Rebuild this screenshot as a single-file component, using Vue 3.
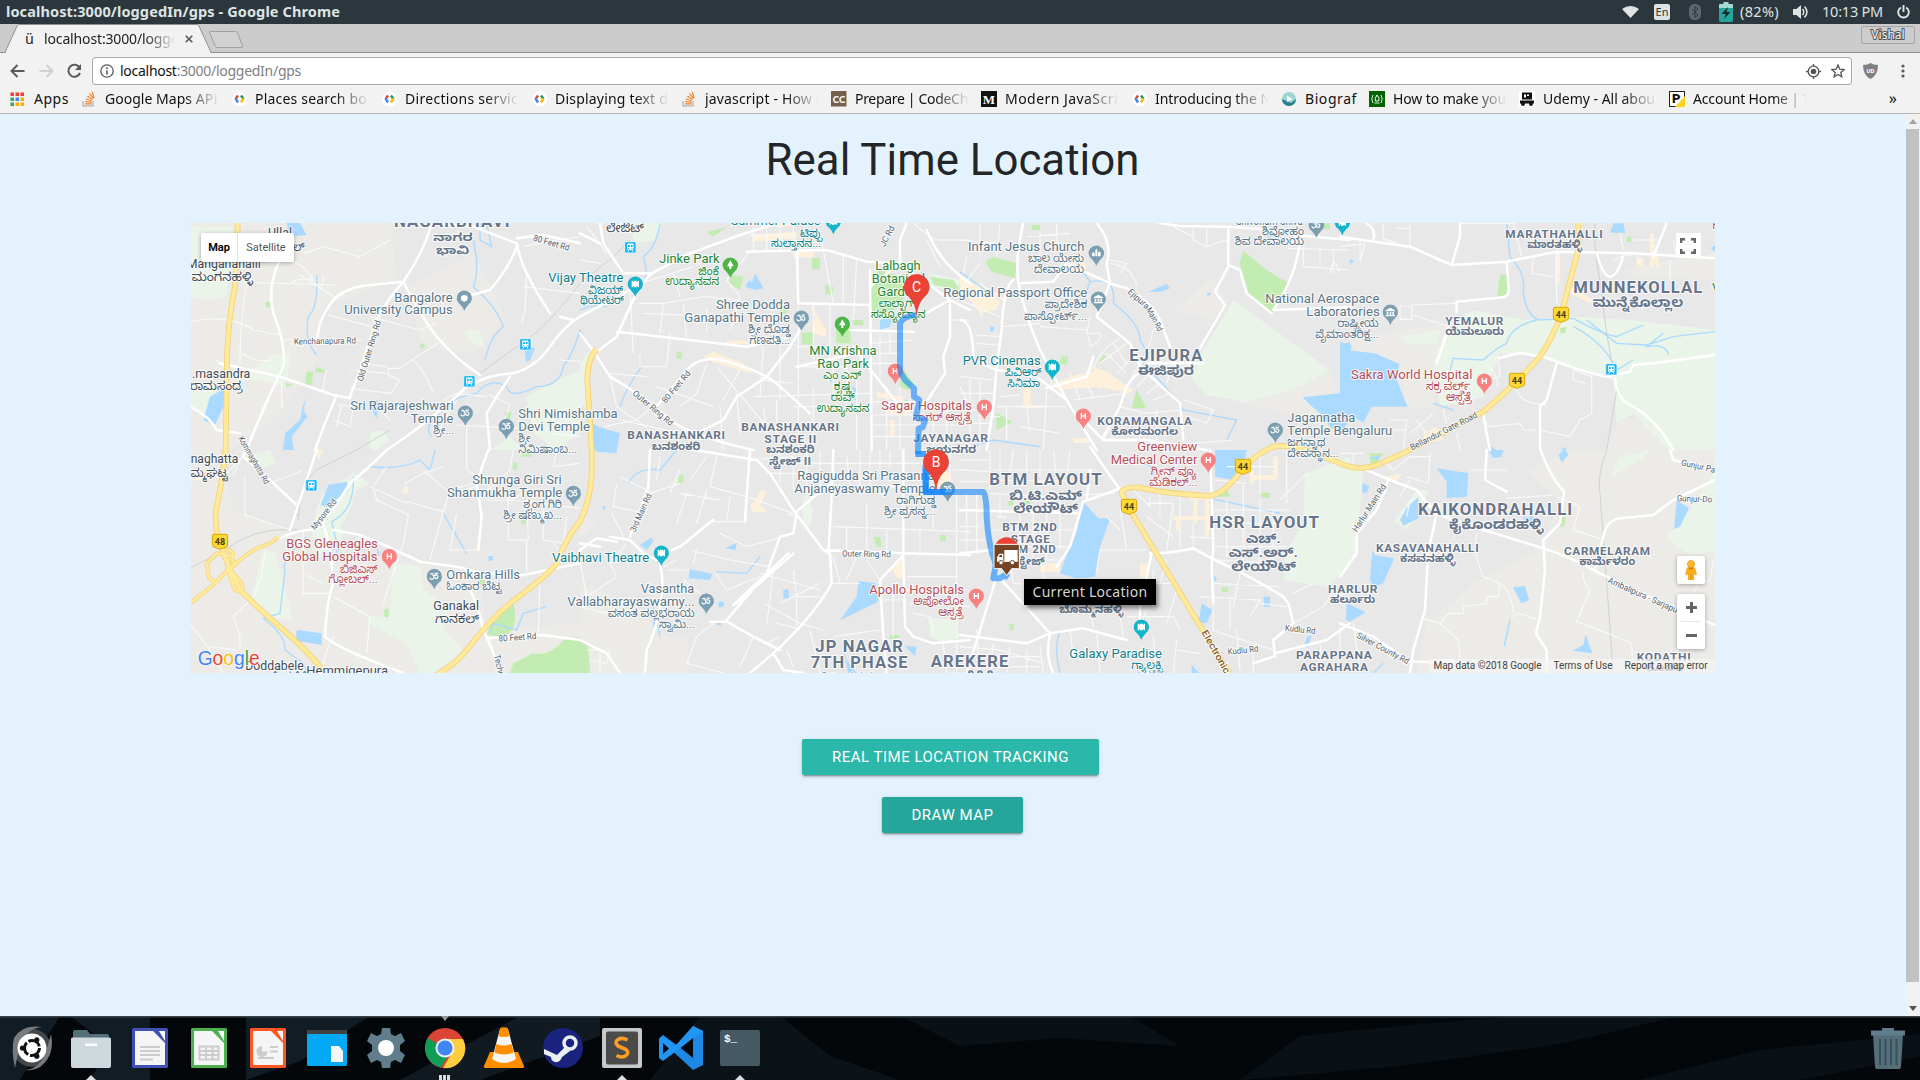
<script setup>
// Stretches or tightens a line of text to a given advance width.
const vFit = {
  mounted(el, { value }) {
    const n = [...el.textContent].length
    const w = el.getBoundingClientRect().width
    el.style.letterSpacing = (value - w) / n + 'px'
  },
}

const bookmarks = [
  { icon: 'stack', text: 'Google Maps API', w: 113 },
  { icon: 'dev', text: 'Places search bo', w: 112 },
  { icon: 'dev', text: 'Directions servic', w: 113 },
  { icon: 'dev', text: 'Displaying text d', w: 113 },
  { icon: 'stack', text: 'javascript - How t', w: 116 },
  { icon: 'cc', text: 'Prepare | CodeCh', w: 113 },
  { icon: 'medium', text: 'Modern JavaScri', w: 113 },
  { icon: 'dev', text: 'Introducing the N', w: 116 },
  { icon: 'bio', text: 'Biograf', w: 52, short: true },
  { icon: 'fcc', text: 'How to make you', w: 113 },
  { icon: 'udemy', text: 'Udemy - All abou', w: 112 },
  { icon: 'pa', text: 'Account Home | T', w: 117 },
]

const dock = ['ubuntu', 'files', 'writer', 'calc', 'impress', 'plank', 'settings', 'chrome', 'vlc', 'steam', 'sublime', 'code', 'terminal']
const running = ['files', 'sublime', 'terminal']

// Map sheets: origin of each sheet on the map canvas (three units per pixel).
const T = { A: [0, 0], B: [0, 690], C: [1170, 0], D: [1170, 690], E: [2310, 0], F: [2310, 690], G: [3450, 0], H: [3450, 690] }
const at = (t) => `translate(${T[t][0]} ${T[t][1]})`

const layers = [
  ['warm', {
    A: 'M0 0L600 0 620 180 400 260 380 420 250 600 120 690 0 690Z M650 200L850 100 950 300 850 400 700 380Z',
    B: 'M0 0L90 0 130 180 300 240 600 330 700 340 870 400 890 540 1170 520 1170 669 0 669Z',
    D: 'M0 400L200 480 230 560 320 560 330 669 0 669Z M0 180L50 220 0 260Z',
    E: 'M640 270L760 170 800 240 760 300Z M820 540L1000 490 1110 450 1170 600 1100 620 900 560Z',
    G: 'M180 330L330 310 280 440 280 560 200 560 180 430 0 370Z M830 610L920 580 990 690 800 690Z M850 150L1125 100 1125 180 880 170Z',
    H: 'M560 60L700 0 1125 0 1125 669 230 669 260 520 400 400 600 300 660 150Z',
  }],
  ['light', {
    A: 'M0 20L130 20 110 230 50 240 0 230Z M130 480L260 400 300 400 290 500 200 480Z M1010 530L1060 500 1170 450 1170 640 1100 690 1030 640Z M820 335L870 330 885 385 850 370Z M0 500L90 500 60 600 0 560Z M900 690L960 650 1000 690Z M540 640L580 630 600 660 560 690H540Z',
    B: 'M490 70L540 100 500 120Q480 190 450 230 470 250 440 290L380 330 370 280Q360 200 400 130Z M220 295L255 310 275 380 310 510 225 500 185 440Z M610 340L690 350 700 420 780 470 760 540 820 600 730 669H690L650 580 530 520 540 500 600 500Z M160 20L240 0 260 40 200 60Z',
    C: 'M0 430L30 390 30 560 0 560Z M150 0L250 0 230 60 160 70Z M1050 160L1140 180 1130 210 1040 200Z',
    D: 'M680 130L700 180 690 230 670 220 665 160Z M1045 500L1120 510 1140 560 1100 580 1050 560Z',
    E: 'M820 240L1110 450Q1000 520 850 545L740 525 695 475 730 390Z',
    F: 'M1035 70L1170 20V350L1100 410 970 390 980 300 1030 220Z',
    G: 'M400 270L560 300 700 290 870 300 1125 330V690H990L880 580 830 610 820 480 700 450 600 410 480 400 430 530 300 560 280 430 330 310Z M180 350L300 330 290 370 200 375Z',
    H: 'M0 40L70 60 60 180 50 320 0 370Z M1125 60L1050 180 980 260 1050 320 1125 300Z M840 20L930 0 900 30 815 80Z M160 215L230 120 270 120 200 240Z',
  }],
  ['park', {
    A: 'M228 246h20v16h-20Z M350 455L370 455 365 495 345 495Z M378 440L405 450 400 460 375 455Z M688 378L697 368 706 378 697 388Z M945 575L965 575 960 600 945 595Z M283 488L312 494 290 502Z M215 120h18v8h-18z',
    B: 'M970 460Q990 540 940 560L890 555 910 500Z M1170 560L1120 570Q1080 620 1030 610L970 640 960 669H1170Z M582 480q8 -8 14 0v18q-6 10 -14 0Z M968 38h14v20h-14z M994 205h12v18h-12z M868 388h16v14h-16z M318 175L325 195 312 205Z M995 0h30v20h-30z',
    C: 'M455 165L490 170 480 210 445 190Z M695 113h25v35h-25z M735 195L760 200 757 225 737 222Z M768 320H812V370H768Z M665 340L700 335V375L665 372Z M290 395h15v22h-15z M895 150L970 170V250L910 290 870 300V220Z M1050 170L1120 180 1140 210 1060 195Z M380 35L430 25 460 5 400 50Z M960 540L985 540 975 570 950 580Z M965 440L1000 490 985 510 960 500Z M600 262h20v20h-20z M820 300h30v16h-30z',
    D: 'M0 570L25 590 30 669H0Z M295 75h15v25h-15z M880 260L900 262 905 290 890 290Z M1080 255h18v18h-18z M930 555H960L955 565 930 567Z',
    E: 'M850 92L920 150 985 190 935 285 870 230 838 130Z M100 110L170 130 165 175 95 155 75 125Z M305 408L325 410 320 435 298 430Z M530 508L560 565H515Z M108 578L158 605 110 630Z M430 405L438 408 425 428 418 425Z M215 15h25v15h-25z M1090 10h20v18h-20z',
    F: 'M905 128h25v15h-25z M770 140L800 115 810 140Z M785 412h20v14h-20z M190 150h20v15h-20z M145 152h15v15h-15z M148 522h14v18h-14z M195 578L240 560 245 565 200 580Z',
    G: 'M480 165L500 163 502 225 470 230Z M660 325L680 320 675 340 662 340Z M860 50h14v16h-14z',
    H: 'M658 205L678 200 672 230 656 228Z M90 10L130 10 110 40 90 40Z',
  }],
  ['cream', {
    B: 'M375 0H400L385 30Z M640 110h14v18h-14z',
    C: 'M520 45L650 35V55L520 65Z M550 10h80v10h-80z M640 92H700V112H640Z M370 410L400 395 490 430 520 460 480 450 400 425Z M690 250L740 330 735 350 700 340 705 290Z M440 362h80v10h-80z M890 515L970 530V545L890 530Z M920 570h70v14h-70z M930 600h14v50h-14z',
    D: 'M510 170L545 120 560 125 540 165 565 185 520 185Z M310 280L395 205 385 225 320 280Z M920 370L965 320 975 385 950 385 940 360Z M1060 90L1100 60 1120 100 1070 110Z',
    E: 'M0 165L120 245 110 270 60 280 0 200Z M50 190L120 220 60 290Z M280 490L350 465 430 450 520 510 510 520 420 500 290 510Z M190 500h22v60h-22z M400 440L450 460 420 510Z M340 655h50v14h-50z M180 555h70v10h-70z M320 130h60v18h-60z',
    F: 'M690 140h65v10h-65z M700 140h12v80h-12z M735 150h12v110h-12z M640 198h120v12h-120z M648 200h10v42h-10z M870 75h80v14h-80z M940 20h14v60h-14z M240 340h60v25h-60z M540 340L565 345 550 390 540 380Z M870 60h12v40h-12z',
    G: 'M645 100h16v90h-16z M930 40h12v100h-12z M890 115h20v25h-20z M945 60L960 150 940 130Z M690 200L760 240 750 250 690 220Z M250 640L290 620 310 660 255 670Z',
    H: 'M140 80L185 70 170 95 140 90Z M250 160h55v12h-55z',
  }],
  ['water', {
    A: 'M60 530L110 500 100 560 75 615 40 600Z M350 530L340 570 352 590 305 650 312 690H280L285 640 330 600 338 560Z M290 9H330L350 45 300 50Z M1003 380L1035 385 1020 420 1008 427Z M535 545L565 540 560 597Z',
    B: 'M415 105L470 95 475 120 410 170 392 165Z M320 540L395 550V585L318 572Z M895 318h14v14h-14z M280 0h24v-20h-24z M560 290l10 25h-8z',
    C: 'M495 200L510 178 515 190 525 160 545 195 550 205 525 210Z M900 300L940 290 930 320 900 330Z M35 610L60 622 120 640 110 690H38Z M815 495L832 510 825 530Z',
    D: 'M180 285L215 262 220 275 200 300Z M330 358L397 372 390 390 326 385Z M435 295L470 278 466 300Z M414 458q12 -8 20 4 -6 14 -18 8Z M610 420L625 418 628 447 610 445Z M835 393L888 400 895 455 780 511 830 440Z M975 588L1010 590 1005 618Z M788 590L800 630 830 669H805Z M220 480h14v40l-14 10Z M410 518h14v8h-14z M68 168h7v10h-7z M38 -20h72v30l-60 -5z',
    E: 'M562 217L620 192 630 205 600 215Z M90 320q8 -6 13 4 -2 14 -12 10Z M741 218h11v8h-11z M1170 365L1150 372 1165 440 1140 520 1028 532 1045 550 1080 580 1110 620 1140 640 1170 600Z',
    F: 'M370 155L415 205 451 205 420 290 405 380 350 385 300 370 318 320 350 250Z M765 0H860L850 60 820 90 765 80Z M725 460L757 480 740 520 715 518Z M910 440h20v30h-18z M1055 555L1045 592 1030 590 1042 560Z M760 375L771 385 764 400Z M695 645L718 669H695Z',
    G: 'M0 366L35 375 32 392 105 400 178 432 170 480 203 560H95L70 608 40 590 0 560Z M820 10H850L856 38H810Z M1112 85L1125 75V95Z M446 675L470 690H446Z M677 680L660 690H677Z M28 120q8 -6 13 4 -4 10 -12 4Z',
    H: 'M290 55L385 70 380 140 320 144V95Z M445 0H490L485 20 460 25Z M655 15L675 -4 685 15 665 37Z M235 140V205L190 227 180 210 200 175Z M97 300L105 315 162 325 130 400 100 412 90 390Z M1010 150L1047 175 1020 230 1002 237Z M518 412L555 408 567 450 545 460Z M20 460L77 487 30 515 18 510Z M737 553L757 610 698 602 730 585Z M68 100L88 108 80 130 66 125Z M550 200h32v18h-32z M85 25L120 15 115 30Z',
  }],
  ['river', {
    A: 'M380 165Q385 260 355 290 340 360 380 405 M850 60Q870 150 850 200 920 260 940 320 900 350 885 420 M1170 330Q1150 400 1120 440 1110 500 1040 500 960 540 950 500 900 470 860 520 780 530 740 590 700 620 725 650 M870 10V60L905 80 890 10',
    B: 'M490 80Q495 180 425 215L445 300 420 330 M530 50Q640 60 690 30L720 60 735 0 M350 260Q270 330 285 360L270 490 220 505Q290 560 285 600L340 640 350 669 M760 190Q800 260 830 310 M900 550L910 520 980 540 1000 490 1070 470',
    C: 'M240 10Q230 80 190 110 210 180 180 190 M0 270Q40 250 80 260 M185 440Q140 500 120 560 M750 480L830 540 M0 330L15 360',
    D: 'M400 365L500 370 540 320 M145 100Q170 50 240 60L290 0 M220 470L240 560',
    E: 'M350 130L390 185 370 240 M390 185Q470 170 460 250 540 310 540 360L555 385 M0 155L90 220 M550 430Q620 500 670 570L830 600 800 660 M0 690L100 660 240 680 M1000 70Q960 40 920 50',
    F: 'M750 145L960 190 M550 40Q590 50 580 80 M300 540Q280 600 300 669',
    G: 'M500 10L510 110Q560 160 550 220 560 290 600 300L700 295Q780 340 830 350L910 315 M700 320Q780 360 820 430 M740 300L830 370 920 375 1000 350 1125 335 M590 300Q510 320 500 370 460 390 430 420L340 415 330 450 M280 550L340 570 M985 405Q980 370 920 380L970 340 M830 450L880 420',
    H: 'M510 510L492 590 M130 640L100 669',
  }],
  ['rail', {
    A: 'M870 460Q950 400 1010 360 1080 310 1170 190',
    B: 'M0 355L120 290Q200 230 330 240 M325 210Q330 100 380 60L500 0 600 -60',
    C: 'M0 190L100 110 150 60',
    G: 'M765 10Q760 80 775 150L800 340 830 510 800 690',
    H: 'M800 0Q770 80 780 130L820 669',
  }],
  ['minor', {
    A: 'M160 187L440 195 M0 305Q120 280 190 330L270 345 M170 190Q150 300 150 430 M280 360H520 M440 235L330 165 M400 170L395 210 M300 190Q330 170 370 180Q340 130 300 125 M415 285L545 320 M540 290L690 330 740 310 M760 360L665 420 630 445 595 445V465L628 480 605 520 480 505 M665 420Q700 440 730 520 M480 450L590 460 M510 430L590 440 M440 555L490 558 480 620 430 600 M455 555L440 620 M410 450L395 520 M275 480V565 M1010 160L1005 270 995 310 M1000 200L1170 220 M1000 80L1100 60 1170 50 M800 615L990 625 M830 615V690 M900 525L960 555 930 640 M740 640L800 540 M560 560L600 600 M340 380L300 370 M80 420L110 450 M155 400Q200 430 240 420 M760 540L800 520 890 530 M340 100L400 80 510 110 600 60 M1110 420L1170 425 M1080 640L1170 650',
    B: 'M165 80V195L300 240 M130 75L165 0 M0 90L100 80 160 20 M590 50L550 110 560 150 655 195 640 280 600 400 580 460 M650 155L760 185 780 120 870 95 M650 110L645 100 700 70 760 50 M760 185L720 330 M340 240V430L420 430 M430 440L540 500 530 610 M200 430L130 500 150 560V600 M225 300L215 380 190 440 M0 520L60 600 100 669 M860 90L865 150 960 150 1170 175 M955 80V270H1010V380 M1010 150L1015 270 M1050 370L1045 560 M510 255L500 280 M700 60L780 130 860 110 M800 190L780 300 865 300 M865 145L960 60 970 0 M1100 0L1090 50 1170 40 M1060 180L1060 270 1120 280 1130 200 M1090 280L1130 330 M830 0V60L900 100 M240 100L340 60 M60 590L140 600 M430 560Q410 600 390 669 M540 110L650 160 M960 150L1000 130 1100 130 M345 375L400 400',
    C: 'M510 95L440 180 480 230 450 330 M655 90V690 M180 400V440H260L270 340 M240 340L250 250 180 250 M250 250L370 230 480 240 M190 280L420 290 M310 250L320 360 M380 260V340 M150 200L160 400 M90 460L200 470 M230 500L400 560 M380 430L350 520 300 560 M410 440L560 620 M480 450L430 540 M540 480L640 490 M550 380L540 530 M600 370V540 M650 380L870 385 M650 440H800 M520 530L870 520 M520 20V90 M560 20V90 M600 15V90 M640 15V90 M510 45H650 M720 30L730 90 760 250 M790 100V250 M830 120L820 300 M700 250V420 M750 250V420 M870 370L1000 360 M880 400H960 M880 430H960 M880 545H1030 M880 585H1000 M880 615H1170 M880 650H1170 M900 340V480 M930 340V400 M920 500V690 M960 500V690 M1060 600V690 M1100 560V690 M1140 500L1170 560 M1040 60L1080 140 M1000 10L1060 60 1170 60 M420 560L430 690 M470 520L480 640 M550 560L560 640 M590 540V640 M640 560H870 M700 500V690 M760 440V520 M800 440V560 M830 480V690 M0 120L60 130 M20 20L80 100 M70 620L170 600 230 550 M180 190L340 140 M90 470L110 560 200 620 M280 160L300 230 M345 110L380 170 M120 600L300 640 M710 450L700 430 M1110 300H1170',
    D: 'M410 20L390 110 500 140 M380 20L330 90 M240 20L230 90 M120 80L220 130 M110 100L100 170 200 190 M95 190L130 260 M210 130L300 100 M380 120L350 220 M320 130L290 220 M300 130L420 150 M300 60L270 130 M500 140L640 190 M500 30L640 20V120 M560 70L650 70 M450 140L440 215 495 215 M600 0V100 M680 0V130 M720 0V140 M760 0V90 M800 20L810 110H1020 M840 0V120 M870 0V130 M900 0V60 M930 0V50 M640 40H1020 M660 70H760 M650 200L620 190 M500 215L400 215 M420 250L500 290 610 260 M330 300L450 330 570 350 M350 300L340 340 M290 330L250 350 M400 360L440 420 540 380 M310 390L360 430 M580 350L570 450 560 520 M640 360L650 440 720 440 M540 370L720 420 M550 460L660 520 730 540 M600 460L720 400 M650 430V530 M590 520L650 535 M400 520L350 560 320 640 430 669 M520 560L480 650 M560 580L600 560 M620 600L640 650 M760 230L1170 245 M860 160V300 M800 230V320 M920 240V310 M1020 240V320 M1060 130V240 M1130 130V669 M1110 0V130 M1080 0V80 M1170 60H1120 M760 320L780 400 M830 320L800 390 M755 400H840 M860 330L900 390 M980 380L1130 380 M980 420H1040 M990 460L1170 470 M910 450H960 M690 540L720 669 M760 560L900 540 M940 400V560 M1000 490L1050 500 1060 550 M1090 580L1100 669 M20 600L90 600 80 640 30 630 M60 590V660 M0 330L20 440 110 380 M110 380L90 340 140 280 M260 360H320 M280 480L340 500 M0 470L80 490',
    E: 'M0 60L120 70 M60 10V110 M120 10L110 110 M200 50L330 40 M240 30V110 M290 10V80 M20 110L10 160 M0 240L120 290 M60 190L130 240 M0 210L60 130 M450 120L500 130 480 160 M450 130Q520 140 530 200 M130 320L240 310 M240 320L380 330 M390 290L380 340 420 340Q430 360 390 380L385 350 M50 345L120 350 M50 370L115 375 M480 355Q430 380 400 440L380 470 M500 370L420 430 M460 370L500 430 M440 400L500 460 M530 400L470 460 M560 400L510 480 M600 320L580 330 560 400 M570 460L530 500 M600 490L560 520 M630 520L580 540 M640 420L620 490 M480 560L560 580 660 570 M470 590L660 600 M540 580V660 M590 570V660 M670 540L760 570 740 610 680 590 M120 530L180 525 M110 560L320 560 M140 560V660 M200 560L210 640 M260 510L250 690 M90 590L120 590 M180 620L300 640 M0 470L100 480 M0 520L105 520 M30 480V690 M60 480V690 M0 570L90 570 M0 610H90 M0 650H90 M290 440L270 500 M330 460L360 540 M370 470L400 530 M340 540L500 520 M700 20V60L740 80 800 60 M740 20V80 M640 20L700 50 M950 40L1020 80 M980 85L1170 90 M1030 60V140L1170 150 M1080 80V140 M1120 90V160 M1110 160Q1120 100 1140 160 M700 670L820 660 M430 660L460 600',
    F: 'M0 30H90 M0 60L90 65 M0 95H80 M90 0V120 M120 0V60 M160 0L150 70 M200 0V70 M240 0V80 M280 0L290 80 M330 0L320 80 M90 130L250 140 460 130 M100 60H400 M80 90L390 95 M110 200H140 M120 140V200 M180 130V340 M220 190V330 M260 130V330 M300 140V300 M100 240H340 M100 290H330 M110 330H300 M0 230H60 M20 130V300 M50 130V310 M0 270H80 M150 330L160 400 300 410 M250 350V410 M190 410L200 440 420 440 M420 300L410 360 M420 300H560 M480 170L500 300 M440 200L480 240 M520 120L570 170V140 M560 160H640 M600 130V200 M560 200L640 260 M640 160L620 300 M660 140V290 M700 220V290 M690 260L760 265 M760 180H990 M770 220H960 M800 150V320 M850 170V330 M900 150V360 M940 180V330 M770 290H980 M760 330L960 340 M800 50H950 M850 100V170 M760 90L860 100 M900 20V130 M980 0V160 M960 150L1040 70 M550 400L640 400 M580 360V470 M500 500L640 500 660 540 M620 330L600 400 M650 420L620 520 M760 400L960 410 M840 370L820 470 M720 440L900 450 870 500 M810 440V540 M900 460L980 470 M755 540L940 600 M760 540V480 M830 540L840 660 M410 540L420 669 M480 500L490 560 M330 540L340 620 M540 530L560 480 M0 590L120 600 250 640 M100 580L90 669 M150 590L140 669 M200 600V669 M50 540L60 669 M240 590L250 669 M0 620H240 M0 650H240 M1000 520L1090 470 1110 440 1170 430 M1000 430L1060 400 M650 570L640 669 M580 560L590 669 M650 600L720 610 M380 430L400 530 M440 460L520 470 M880 590V669 M1080 580L1090 669 M1140 530V600',
    G: 'M130 10V55L170 70 M0 80L75 70 60 125 M210 10V80 M170 25H210 M60 55V120 M360 10H520L545 110 M580 115L575 160 640 170 M650 100V250 M820 120Q860 100 880 105 M180 258H215V298H180Z M215 285L330 320 M215 255L350 250 M700 130L690 200 M880 60L960 60 M890 100L900 130 M990 120V180 M1000 60L1010 110 M840 40L850 90 M530 500Q530 550 620 555 M600 630L690 650 720 600 755 580V470L700 450 M700 455V480L740 490 M430 600L450 620 540 610 550 630 590 630 M475 415L480 470 440 480 M310 570L320 610 M150 600H200L190 690 M160 630H200 M230 600L260 640 M350 640L360 690 M280 580L210 640 M440 430Q480 470 470 500',
    H: 'M410 250Q400 320 430 380L480 400Q520 430 520 500L535 490 590 508 M480 400L475 440 440 440V460L370 470V490L325 490 300 520 250 505 M300 520L355 570 362 635 M725 360L735 400 750 420 710 515 790 545 875 580 880 669 M650 140L720 170 700 240 780 265 M1060 430L1075 400 1110 390 1120 330 M960 669L1020 590 M270 10L265 100 200 80 M500 145L640 135 M210 90L180 140 M0 10H70 M160 60L210 20 270 20 M130 30L160 60 M210 150L200 200 M40 10V50 M285 190L350 220 340 270 M390 60L500 60 M40 520L60 669 M200 635L280 640 M140 120L110 180',
  }],
  ['road', {
    A: 'M725 9Q700 100 640 185 590 240 560 300L510 450 480 530 M640 185Q680 270 740 350 800 420 870 465 M590 690Q740 590 830 500 900 460 970 460 1040 440 1080 380 1120 320 1170 290 M720 9L850 20 980 70Q990 120 1010 160 1040 220 1080 280 M980 55L1060 45 1170 70 M980 80Q960 140 900 210L845 225 M640 185L540 195Q480 200 440 230 410 260 390 310L380 360 M270 120Q230 200 250 280 290 380 280 440 220 560 170 690 M90 430L270 470 430 525 480 535 M440 525Q400 620 375 690 M0 560Q60 590 80 630L150 640 M960 470L920 530 890 580 900 690 M1110 290L1150 300',
    B: 'M270 265Q330 235 380 240 430 180 480 100 540 50 590 0 M380 0Q340 120 300 240 M160 20L240 90 320 165 M395 215Q420 260 430 400 410 450 405 560 450 600 640 669 M430 240L510 255Q600 290 690 335L800 350 880 370Q960 380 1000 375L1170 340 M895 0L880 40 860 100 875 200 865 300 M840 420Q870 480 880 540 910 600 930 669 M890 565L1060 555 1170 570 M170 0L160 20',
    C: 'M60 10L70 70 130 160 215 160 330 100 480 45 590 10 M215 160Q190 180 150 260L110 350 45 400 M0 340L45 400 90 470Q180 520 270 600 340 650 520 690 M110 335L200 345 500 380 630 350 M650 90L655 250 870 255 M230 560L330 440Q380 400 460 430 560 460 600 500L690 580 M500 95L740 90 860 125 960 130 M870 150L875 690 M660 330L630 380 560 470 470 530 430 600 350 640 M980 10L960 60V130L1000 160 1110 240 1170 270 M1020 290L1110 240 M820 380L880 460 960 560 M810 330L1000 335 M1110 240V350L1090 410 1095 460 1030 560 M960 130L870 200 M0 290L150 210 M1040 30Q1080 130 1170 190 M0 40L60 70 M650 440L830 400',
    D: 'M280 -10L530 30 570 70 640 180 730 300 970 310 1170 315 M510 0L500 140 495 215 M400 210L300 290 250 310 M240 340Q255 400 240 470 230 540 200 600L195 669 M730 300L750 310 755 400Q700 500 580 610L510 669 M760 0L755 140 745 310 M390 515H440L520 560 600 600 M580 610L610 660 670 669 M440 510L560 370 600 260 640 250 650 190 M640 310L470 460 M625 310L460 465 M90 260L150 270 190 310 230 330 M0 570L80 610 120 669 M970 0V320L975 530 1000 560 1060 580 1170 570 M970 315L900 390 910 560 920 669 M650 185L760 90 M210 0L205 110 150 260 M0 300L50 265 110 275 M0 280L60 290',
    E: 'M190 9Q165 110 175 190 200 300 240 390L320 540 410 690 M160 180Q130 200 125 330L110 440 100 560 80 690 M0 300Q40 300 40 420L110 450 230 470 320 540 M175 190L280 185 320 130 450 190 500 205Q570 240 600 300L630 380 M410 290L510 370 540 440 660 550 670 660 M550 450Q500 480 490 530L480 560 430 650 M410 9Q460 70 440 130L450 190 410 290 M600 10L660 18 800 20 950 30 1000 45 1170 60 M805 20V140L765 215 795 255 720 385 M1020 60Q1010 170 940 270L1170 262 M935 280L860 220 840 150 805 135 M380 470Q280 500 260 505 M560 430H730 M370 600L430 660 560 660 740 690 M380 470L400 410',
    F: 'M390 -10L480 120 M480 115L440 130 370 155 350 220 330 290 290 350 M105 395L60 540 20 669 M120 385L270 550Q255 620 280 669 M570 310Q640 310 700 295 760 330 830 360 940 420 970 440L985 460 1000 520 940 570 945 620 M575 310L555 400 540 440V520 M750 0L755 140 760 290 755 350 760 460 M0 310L100 300 M0 555L200 580 270 550 370 535 500 570 M945 610L1100 570 1170 520 M0 180L350 190 M940 620L880 640 M380 150L390 60',
    G: 'M0 50L210 80 335 135 500 125 650 95 880 100 1125 115 M335 135L360 50V10 M500 125L505 190Q510 230 490 232L350 245V275 M330 310L290 430 M610 410Q740 460 800 470L870 455 880 435 940 430 1125 405 M825 475Q830 540 880 560 950 600 1000 690 M475 415L540 398 600 410 M650 430L620 540 600 560V690 M430 580L440 640 450 690 M100 60Q110 30 80 10 M940 110L980 10 M770 100Q790 170 810 170T850 110',
    H: 'M80 60L150 90 230 120Q260 160 290 190L430 240 610 295Q690 320 760 360L900 430 1125 525 M600 -5Q630 80 672 125L660 220 610 270 615 360 600 500 588 550 620 600V669 M765 355L790 260Q800 210 840 205L940 195 1000 150 1125 90 M990 0L1000 30 1125 60 M290 190L275 260 265 300 255 480 220 600 210 669 M145 90L110 180 50 250V310L0 380 M0 520L100 560 210 635 340 635 M440 0L435 90 500 125',
  }],
]

const highways = [
  ['A', 'M143 5Q143 60 135 200 110 320 110 460L107 700'],
  ['B', 'M107 -5Q100 80 80 170 70 220 90 280 110 340 150 420 200 470 280 540 340 590 390 650L410 680'],
  ['B', 'M0 460L70 405Q140 330 200 295 240 285 265 260', 1],
  ['B', 'M135 320L80 310 50 340 57 385 80 400 M105 300Q140 300 125 330L140 350 M110 350L135 420 160 430 155 400 130 370', 2],
  ['B', 'M740 675Q800 640 830 600 900 510 960 460 1080 370 1100 340 1130 260 1170 215 1200 150 1205 80V0 Q1200 -100 1192 -200 1190 -270 1220 -303'],
  ['F', 'M510 180L485 130Q480 112 540 112 600 130 750 138 790 130 830 80 870 20 940 -10 1000 -20 1080 15L1140 40Q1200 65 1250 45L1330 10 1570 -115Q1670 -200 1740 -280 1800 -370 1820 -470L1855 -600V-685'],
  ['F', 'M485 125L510 180 740 560Q770 610 815 680'],
]

const poi = [
  ['A', 823, 235, 'slate', 'dot'], ['A', 826, 580, 'slate', 'om'], ['A', 949, 620, 'slate', 'om'],
  ['B', 1150, 131, 'slate', 'om'], ['B', 598, 320, 'rose', 'h'], ['B', 733, 380, 'slate', 'om'],
  ['C', 166, 193, 'teal', 'film'], ['C', 451, 136, 'green', 'tree'], ['C', 664, 295, 'slate', 'om'], ['C', 787, 313, 'green', 'tree'],
  ['C', 760, 5, 'teal', 'film'], ['C', 946, 454, 'rose', 'h'],
  ['D', 1103, 118, 'slate', 'om'], ['D', 244, 310, 'teal', 'film'], ['D', 379, 454, 'slate', 'om'],
  ['E', 409, 100, 'slate', 'church'], ['E', 415, 238, 'slate', 'civic'], ['E', 277, 442, 'teal', 'film'], ['E', 73, 562, 'rose', 'h'],
  ['E', 370, 589, 'rose', 'h'], ['E', 946, 631, 'slate', 'om'], ['E', 1069, 16, 'slate', 'om'], ['E', 1147, 8, 'teal', 'film'],
  ['F', 745, 31, 'rose', 'h'], ['F', 49, 439, 'rose', 'h'], ['F', 544, 532, 'teal', 'film'],
  ['G', 151, 277, 'slate', 'civic'], ['G', 433, 484, 'rose', 'h'],
]
const trains = [['A', 1006, 373], ['A', 838, 484], ['B', 364, 106], ['C', 151, 82], ['G', 814, 448]]
const shields = [['B', 90, 275, '48'], ['F', 849, 50, '44'], ['F', 507, 170, '44'], ['G', 663, 284, '44'], ['G', 531, 482, '44']]

// sheet, x, baseline, text, style, advance width, rotation
const labels = [
  ['A', 612, 18, 'NAGARBHAVI', 'hood', 350], ['A', 730, 60, 'ನಾಗರ', 'knh', 118], ['A', 738, 101, 'ಭಾವಿ', 'knh', 100],
  ['A', 234, 50, 'Ullal', 'town', 72], ['A', 310, 92, 'ಲ್', 'knt', 34],
  ['A', -10, 142, 'Manganahalli', 'town', 222], ['A', 5, 182, 'ಮಂಗನಹಳ್ಳಿ', 'knt', 184],
  ['A', 1028, 60, '80 Feet Rd', 'way', 112, 16],
  ['A', 613, 243, 'Bangalore', 'poi', 175], ['A', 463, 281, 'University Campus', 'poi', 325],
  ['A', 312, 372, 'Kenchanapura Rd', 'way', 186, -1], ['A', 518, 484, 'Old Outer Ring Rd', 'way', 190, -73],
  ['A', 6, 473, '.masandra', 'town', 175], ['A', 0, 509, 'ರಾಮಸಂದ್ರ', 'knt', 158],
  ['A', 481, 569, 'Sri Rajarajeshwari', 'poi', 310], ['A', 662, 608, 'Temple', 'poi', 128], ['A', 730, 641, 'ಶ್ರೀ...', 'kn', 62],
  ['A', 985, 593, 'Shri Nimishamba', 'poi', 298], ['A', 985, 632, 'Devi Temple', 'poi', 215], ['A', 985, 664, 'ಶ್ರೀ', 'kn', 36], ['A', 985, 698, 'ನಿಮಿಷಾಂಬ...', 'kn', 175],
  ['A', 144, 654, 'Kommaghatta Rd', 'way', 160, 60],
  ['A', 1075, 185, 'Vijay Theatre', 'thea', 225], ['C', 24, 219, 'ವಿಜಯ್', 'knc', 106], ['C', 0, 250, 'ಥಿಯೇಟರ್', 'knc', 132],
  ['B', 2, 38, 'naghatta', 'town', 143], ['B', 2, 78, 'ಮ್ಮಘಟ್ಟ', 'knt', 112],
  ['B', 376, 240, 'Mysore Rd', 'way', 108, -53],
  ['B', 847, 101, 'Shrunga Giri Sri', 'poi', 268], ['B', 771, 140, 'Shanmukha Temple', 'poi', 346], ['B', 1000, 171, 'ಶೃಂಗ ಗಿರಿ', 'kn', 116], ['B', 940, 206, 'ಶ್ರೀ ಷಣ್ಮುಖ...', 'kn', 176],
  ['B', 289, 293, 'BGS Gleneagles', 'hosp', 274], ['B', 277, 332, 'Global Hospitals', 'hosp', 285], ['B', 450, 366, 'ಬಿಜಿಎಸ್', 'knr', 113], ['B', 415, 398, 'ಗ್ಲೋಬಲ್...', 'knr', 148],
  ['B', 769, 386, 'Omkara Hills', 'poi', 221], ['B', 769, 419, 'ಓಂಕಾರ ಬೆಟ್ಟ', 'kn', 166],
  ['B', 730, 479, 'Ganakal', 'town', 137], ['B', 735, 516, 'ಗಾನಕಲ್', 'knt', 132],
  ['B', 926, 573, '80 Feet Rd', 'way', 114, -4], ['B', 912, 614, 'Techno', 'way', 80, 78],
  ['B', 166, 658, 'Doddabele', 'town', 175], ['B', 240, 690, 'ದೊಡ್ಡಬೆಲೆ', 'knt', 110], ['B', 349, 672, 'Hemmigepura', 'town', 245],
  ['B', 1086, 334, 'Vaibhavi Theatre', 'thea', 292],
  ['C', 78, 34, 'ಲೇಔಟ್', 'knt', 114], ['C', 452, 12, 'Summer Palace', 'thea', 270], ['C', 660, 48, 'ಟಿಪ್ಪು', 'knc', 66], ['C', 573, 78, 'ಸುಲ್ತಾನನ...', 'knc', 150],
  ['C', 237, 127, 'Jinke Park', 'parkl', 182], ['C', 355, 162, 'ಜಿಂಕೆ', 'kng', 62], ['C', 256, 192, 'ಉದ್ಯಾನವನ', 'kng', 162],
  ['C', 408, 264, 'Shree Dodda', 'poi', 222], ['C', 313, 304, 'Ganapathi Temple', 'poi', 317], ['C', 504, 338, 'ಶ್ರೀ ದೊಡ್ಡ', 'kn', 128], ['C', 508, 369, 'ಗಣಪತಿ...', 'kn', 122],
  ['C', 914, 80, 'JC Rd', 'way', 66, -62],
  ['C', 886, 148, 'Lalbagh', 'parkl', 136], ['C', 875, 187, 'Botanical', 'parkl', 160], ['C', 892, 226, 'Garden', 'parkl', 125], ['C', 896, 259, 'ಲಾಲ್ಬಾಗ್', 'kng', 110], ['C', 873, 292, 'ಸಸ್ಯೋದ್ಯಾನ', 'kng', 164],
  ['C', 688, 403, 'MN Krishna', 'parkl', 202], ['C', 712, 442, 'Rao Park', 'parkl', 155], ['C', 730, 474, 'ಎಂ ಎನ್', 'kng', 114], ['C', 762, 508, 'ಕೃಷ್ಣ', 'kng', 52], ['C', 752, 540, 'ರಾವ್', 'kng', 72], ['C', 710, 574, 'ಉದ್ಯಾನವನ', 'kng', 158],
  ['C', 156, 521, 'Outer Ring Rd', 'way', 150, 40], ['C', 257, 550, '80 Feet Rd', 'way', 118, -50],
  ['C', 904, 568, 'Sagar Hospitals', 'hosp', 272], ['C', 998, 600, 'ಸಾಗರ್ ಆಸ್ಪತ್ರೆ', 'knr', 178],
  ['C', 142, 654, 'BANASHANKARI', 'hoods', 295], ['C', 215, 688, 'ಬನಶಂಕರಿ', 'knh', 146],
  ['C', 484, 630, 'BANASHANKARI', 'hoods', 295], ['C', 553, 666, 'STAGE II', 'hoods', 158], ['C', 558, 698, 'ಬನಶಂಕರಿ', 'knh', 146],
  ['C', 1000, 664, 'JAYANAGAR', 'hoods', 226], ['C', 1038, 698, 'ಜಯನಗರ', 'knh', 150],
  ['C', 1090, 229, 'Regional Passport Office', 'poi', 432],
  ['D', 567, 43, 'ಸ್ಟೇಜ್ II', 'knh', 126],
  ['D', 652, 88, 'Ragigudda Sri Prasanna', 'poi', 412], ['D', 643, 128, 'Anjaneyaswamy Temple', 'poi', 424], ['D', 948, 160, 'ರಾಗಿಗುಡ್ಡ', 'kn', 120], ['D', 912, 194, 'ಶ್ರೀ ಪ್ರಸನ್ನ...', 'kn', 154],
  ['D', 166, 246, '3rd Main Rd', 'way', 122, -66], ['D', 786, 318, 'Outer Ring Rd', 'way', 146, 1],
  ['D', 182, 427, 'Vasantha', 'poi', 161], ['D', -38, 466, 'Vallabharayaswamy...', 'poi', 382], ['D', 84, 499, 'ವಸಂತ ವಲ್ಲಭರಾಯ', 'kn', 260], ['D', 236, 533, 'ಸ್ವಾಮಿ...', 'kn', 108],
  ['D', 868, 430, 'Apollo Hospitals', 'hosp', 284], ['D', 1000, 463, 'ಅಪೋಲೋ', 'knr', 152], ['D', 1075, 496, 'ಆಸ್ಪತ್ರೆ', 'knr', 76],
  ['D', 706, 604, 'JP NAGAR', 'hood', 266], ['D', 692, 652, '7TH PHASE', 'hood', 294], ['D', 706, 698, 'ಜೆಪಿ ನಗರ 7TH', 'knhb', 265],
  ['D', 1052, 648, 'AREKERE', 'hood', 236], ['D', 1110, 692, 'ಅರೆಕೆರೆ', 'knhb', 130],
  ['E', 24, 92, 'Infant Jesus Church', 'poi', 349], ['E', 204, 124, 'ಬಾಲ ಯೇಸು', 'kn', 168], ['E', 222, 158, 'ದೇವಾಲಯ', 'kn', 150],
  ['E', 254, 263, 'ಪ್ರಾದೇಶಿಕ', 'kn', 128], ['E', 192, 297, 'ಪಾಸ್ಪೋರ್ಟ್...', 'kn', 188],
  ['E', 502, 216, 'Ejipura', 'way', 76, 42], ['E', 558, 267, 'Main Rd', 'way', 76, 62],
  ['E', 508, 420, 'EJIPURA', 'hood', 222], ['E', 534, 463, 'ಈಜಿಪುರ', 'knhb', 168],
  ['E', 8, 433, 'PVR Cinemas', 'thea', 234], ['E', 134, 466, 'ಪಿವಿಆರ್', 'knc', 110], ['E', 142, 500, 'ಸಿನಿಮಾ', 'knc', 98],
  ['E', 412, 612, 'KORAMANGALA', 'hoods', 286], ['E', 454, 643, 'ಕೋರಮಂಗಲ', 'knh', 200],
  ['E', 532, 692, 'Greenview', 'hosp', 180], ['E', 828, 12, 'Shivoham Shiva', 'poi', 200], ['E', 906, 42, 'ಶಿವೋಹಂ', 'kn', 126], ['E', 824, 74, 'ಶಿವ ದೇವಾಲಯ', 'kn', 208],
  ['E', 916, 248, 'National Aerospace', 'poi', 342], ['E', 1039, 287, 'Laboratories', 'poi', 220], ['G', -8, 320, 'ರಾಷ್ಟ್ರೀಯ', 'kn', 124], ['G', -74, 353, 'ವೈಮಾಂತರಿಕ್ಷ...', 'kn', 190],
  ['E', 982, 605, 'Jagannatha', 'poi', 204], ['E', 982, 644, 'Temple Bengaluru', 'poi', 315], ['E', 982, 675, 'ಜಗನ್ನಾಥ', 'kn', 114], ['F', 982, 20, 'ದೇವಸ್ಥಾನ...', 'kn', 154],
  ['F', 452, 40, 'Medical Center', 'hosp', 260], ['F', 572, 74, 'ಗ್ರೀನ್ ವ್ಯೂ', 'knr', 138], ['F', 568, 107, 'ಮೆಡಿಕಲ್...', 'knr', 144],
  ['F', 88, 104, 'BTM LAYOUT', 'hood', 340], ['F', 148, 147, 'ಬಿ.ಟಿ.ಎಮ್', 'knhb', 218], ['F', 160, 188, 'ಲೇಯೌಟ್', 'knhb', 194],
  ['F', 127, 240, 'BTM 2ND', 'hoods', 166], ['F', 152, 276, 'STAGE', 'hoods', 120], ['F', 127, 308, 'BTM 2ND', 'hoods', 162], ['F', 170, 342, 'ಸ್ಟೇಜ್', 'knh', 84],
  ['F', 748, 232, 'HSR LAYOUT', 'hood', 332], ['F', 858, 276, 'ಎಚ್.', 'knhb', 104], ['F', 806, 318, 'ಎಸ್.ಅರ್.', 'knhb', 208], ['F', 814, 360, 'ಲೇಯೌಟ್', 'knhb', 194],
  ['F', 298, 486, 'ಬೊಮ್ಮನಹಳ್ಳಿ', 'knh', 192],
  ['F', 328, 622, 'Galaxy Paradise', 'thea', 278], ['F', 514, 655, 'ಗ್ಯಾಲಕ್ಸಿ', 'knc', 94], ['F', 530, 686, 'ಪ್ಯಾರಡೈಸ್', 'knc', 80],
  ['F', 724, 545, 'Electronics City', 'exp', 225, 61],
  ['F', 974, 541, 'Kudlu Rd', 'way', 92, 6], ['F', 804, 613, 'Kudlu Rd', 'way', 92, -6],
  ['F', 1104, 426, 'HARLUR', 'hoods', 150], ['F', 1110, 458, 'ಹರ್ಲೂರು', 'knh', 136],
  ['F', 1008, 624, 'PARAPPANA', 'hoods', 230], ['F', 1020, 660, 'AGRAHARA', 'hoods', 206],
  ['G', 496, 52, 'MARATHAHALLI', 'hoods', 294], ['G', 562, 82, 'ಮಾರತಹಳ್ಳಿ', 'knh', 164],
  ['G', 700, 217, 'MUNNEKOLLAL', 'hood', 390], ['G', 758, 259, 'ಮುನ್ನೆಕೊಲ್ಲಾಲ', 'knhb', 272], ['G', 1116, 214, 'V', 'parkl', 24], ['G', 1117, 26, 'H', 'hosp', 24],
  ['G', 316, 312, 'YEMALUR', 'hoods', 176], ['G', 316, 342, 'ಯೆಮಲೂರು', 'knh', 176],
  ['G', 33, 475, 'Sakra World Hospital', 'hosp', 364], ['G', 258, 508, 'ಸಕ್ರ ವರ್ಲ್ಡ್', 'knr', 132], ['G', 318, 542, 'ಆಸ್ಪತ್ರೆ', 'knr', 78],
  ['G', 216, 690, 'Bellandur Gate Road', 'way', 222, -27],
  ['H', 234, 194, 'KAIKONDRAHALLI', 'hood', 466], ['H', 326, 236, 'ಕೈಕೊಂಡರಹಳ್ಳಿ', 'knhb', 284],
  ['H', 108, 304, 'KASAVANAHALLI', 'hoods', 310], ['H', 180, 335, 'ಕಸವನಹಳ್ಳಿ', 'knh', 166],
  ['H', 50, 246, 'Harlur Main Rd', 'way', 164, -57],
  ['H', 672, 312, 'CARMELARAM', 'hoods', 260], ['H', 718, 343, 'ಕಾರ್ಮೆಳರಂ', 'knh', 168],
  ['H', 1022, 44, 'Gunjur Palya', 'way', 134, 13], ['H', 1010, 152, 'Gunjur-Do', 'way', 106, 2],
  ['H', 802, 396, 'Ambalipura - Sarjapur', 'way', 234, 24],
  ['H', 48, 560, 'Silver County Rd', 'way', 174, 28],
  ['H', 890, 632, 'KODATHI', 'hoods', 164], ['H', 918, 662, 'ಕೊಡತಿ', 'knh', 112],
]
const place = (l) => {
  const x = T[l[0]][0] + l[1]
  const y = T[l[0]][1] + l[2] + 1.5
  return l[6] ? `translate(${x} ${y}) rotate(${l[6]})` : `translate(${x} ${y})`
}
</script>

<template>
  <div class="desktop">
    <header class="panel">
      <span class="panel-title"><span v-fit="334">localhost:3000/loggedIn/gps - Google Chrome</span></span>
      <div class="tray">
        <svg class="wifi" width="17" height="12" viewBox="0 0 17 12"><path d="M0 3Q8.500 -3 17 3L8.500 12Z" fill="#dfe3e4" /></svg>
        <span class="lang">En</span>
        <svg class="bt" width="12" height="16" viewBox="0 0 12 16"><rect width="12" height="16" rx="5.500" fill="#5c686d" /><path d="M3 5l6 6-3 2.500V2.500L9 5l-6 6" fill="none" stroke="#2b373d" /></svg>
        <svg class="bat" width="14" height="20" viewBox="0 0 14 20"><path d="M4.500 0h5v2H13a1 1 0 0 1 1 1v4H0V3a1 1 0 0 1 1-1h3.500z" fill="#a5dbd5" /><path d="M0 6h14v12.500a1.500 1.500 0 0 1-1.500 1.500h-11A1.500 1.500 0 0 1 0 18.500z" fill="#26a69a" /><path d="M9 5L2.500 12H7l-2 5 6.500-7H7.500z" fill="#14282d" /></svg>
        <span class="pct"><span v-fit="39">(82%)</span></span>
        <svg class="vol" width="16" height="14" viewBox="0 0 16 14"><path d="M0 4h3.500L8 0v14l-4.500-4H0z" fill="#dfe3e4" /><path d="M9.500 4q2.500 3 0 6M11.500 1.500q5 5.500 0 11" fill="none" stroke="#dfe3e4" stroke-width="1.500" /></svg>
        <span class="clock"><span v-fit="61">10:13 PM</span></span>
        <svg width="13" height="14" viewBox="0 0 13 14"><path d="M4 2.500a5.300 5.300 0 1 0 5 0M6.500 0v7" fill="none" stroke="#dfe3e4" stroke-width="1.900" /></svg>
      </div>
    </header>

    <div class="tabstrip">
      <svg class="tabshape" width="250" height="29" viewBox="0 0 250 29">
        <path d="M0 28.500H5L17 2Q18 .5 19.500 .5H197Q198.500 .5 199 2L211 28.500H250" fill="#f2f2f2" stroke="#8f8f8f" />
        <path d="M6 29L17.600 3Q18.500 1 20 1H197L210.500 29Z" fill="#f2f2f2" />
        <path d="M210 7.500H235.500Q237 7.500 237.700 9L242.600 22Q243 23.500 241.500 23.500H217.500Q216 23.500 215.300 22L209.700 9Q209.300 7.500 210 7.500Z" fill="#d2d2d2" stroke="#a0a0a0" />
      </svg>
      <span class="fav">ü</span>
      <span class="tabtitle"><span v-fit="143">localhost:3000/logged</span></span>
      <svg class="tabx" width="8" height="8" viewBox="0 0 8 8"><path d="M.7.7l6.600 6.600M7.300.7L.7 7.300" stroke="#555" stroke-width="1.600" /></svg>
      <span class="user">Vishal</span>
    </div>

    <div class="toolbar">
      <svg width="82" height="28" viewBox="0 0 82 28">
        <path d="M24.500 14H12M17.500 8l-6 6 6 6" fill="none" stroke="#5a5a5a" stroke-width="2" />
        <path d="M39.500 14H52M46.500 8l6 6-6 6" fill="none" stroke="#d0d0d0" stroke-width="2" />
        <path d="M79.500 10.500A6 6 0 1 0 80 16" fill="none" stroke="#5a5a5a" stroke-width="2" /><path d="M81 7v6h-6z" fill="#5a5a5a" />
      </svg>
      <div class="omni">
        <svg width="14" height="14" viewBox="0 0 14 14"><circle cx="7" cy="7" r="6.200" fill="none" stroke="#5a5a5a" stroke-width="1.300" /><path d="M7 6.200v4.300M7 3.200v1.700" stroke="#5a5a5a" stroke-width="1.600" /></svg>
        <span class="url"><span v-fit="181"><b>localhost</b>:3000/loggedIn/gps</span></span>
        <svg class="loc" width="15" height="15" viewBox="0 0 15 15"><circle cx="7.500" cy="7.500" r="5.300" fill="none" stroke="#555" stroke-width="1.300" /><circle cx="7.500" cy="7.500" r="2.800" fill="#555" /><path d="M7.500 0v2M7.500 13v2M0 7.500h2M13 7.500h2" stroke="#555" stroke-width="1.400" /></svg>
        <svg width="14" height="14" viewBox="0 0 14 14"><path d="M7 1l1.700 4.100 4.500.4-3.400 2.900 1 4.400L7 10.500l-3.800 2.300 1-4.400L.8 5.500l4.500-.4z" fill="none" stroke="#555" stroke-width="1.300" /></svg>
      </div>
      <svg class="ub" width="15" height="16" viewBox="0 0 15 16"><path d="M7.500 0Q10 2 15 2q0 10-7.500 14Q0 12 0 2q5 0 7.500-2z" fill="#808080" /><text x="7.500" y="9.500" text-anchor="middle" font-size="6" font-weight="700" font-family="Roboto, sans-serif" fill="#fff">UD</text></svg>
      <svg class="dots" width="4" height="14" viewBox="0 0 4 14"><circle cx="2" cy="2" r="1.600" fill="#5a5a5a" /><circle cx="2" cy="7" r="1.600" fill="#5a5a5a" /><circle cx="2" cy="12" r="1.600" fill="#5a5a5a" /></svg>
    </div>

    <nav class="bookmarks">
      <div class="bm apps">
        <svg width="16" height="16" viewBox="0 0 16 16"><path d="M1.500 1.500h3.500v3.500h-3.500zM6.500 1.500h3.500v3.500h-3.500zM11.500 1.500h3.500v3.500h-3.500z" fill="#ea4335" /><path d="M1.500 6.500h3.500v3.500h-3.500zM1.500 11.500h3.500v3.500h-3.500z" fill="#34a853" /><path d="M6.500 6.500h3.500v3.500h-3.500z" fill="#4285f4" /><path d="M11.500 6.500h3.500v3.500h-3.500zM11.500 11.500h3.500v3.500h-3.500zM6.500 11.500h3.500v3.500h-3.500z" fill="#fbab05" /></svg>
        <span class="bmt"><span v-fit="35">Apps</span></span>
      </div>
      <div v-for="b in bookmarks" :key="b.text" class="bm" :class="{ short: b.short }">
        <svg width="16" height="16" viewBox="0 0 16 16">
          <template v-if="b.icon === 'stack'">
            <path d="M2 10v5h10v-5" fill="none" stroke="#a9a9a9" stroke-width="1.200" /><path d="M4 12.800h6.500M4.100 10.500l6.400.9M4.800 7.800l6 2.200M6.300 5l5.200 3.600M8.500 2.700l4 5M11.300 1l1.700 6" stroke="#f48024" stroke-width="1.200" />
          </template>
          <template v-else-if="b.icon === 'dev'">
            <circle cx="8.500" cy="8" r="7.500" fill="#fff" /><path d="M7 4.500L4.500 8" stroke="#ea4335" stroke-width="2.400" /><path d="M4.500 7.500L7 11.500" stroke="#4285f4" stroke-width="2.400" /><path d="M10 4.500L12.500 8" stroke="#0f9d58" stroke-width="2.400" /><path d="M12.500 7.500L10 11.500" stroke="#fbbc05" stroke-width="2.400" />
          </template>
          <template v-else-if="b.icon === 'cc'"><rect width="15.500" height="15.500" fill="#75604e" /><text x="8" y="11.500" text-anchor="middle" font-size="9.500" font-weight="900" font-family="Lato, sans-serif" fill="#fff">CC</text></template>
          <template v-else-if="b.icon === 'medium'"><rect width="16" height="16" fill="#111" /><text x="8" y="12.500" text-anchor="middle" font-size="13" font-weight="700" font-family="'Liberation Serif', serif" fill="#fff">M</text></template>
          <template v-else-if="b.icon === 'bio'"><circle cx="8" cy="8" r="7" fill="#9ad6d4" /><path d="M1 8a7 7 0 0 0 14 0l-5 4z" fill="#2b7f8c" /><path d="M6 4.500L11.500 8 6 11z" fill="#fff" /></template>
          <template v-else-if="b.icon === 'fcc'"><rect width="16" height="16" fill="#006400" /><path d="M4 4Q1.500 8 4 12M12 4q2.500 4 0 8M5.500 12h5" fill="none" stroke="#fff" stroke-width=".9" /><path d="M8 4q3.500 3.500 1.500 6h-3Q5 8 8 4z" fill="none" stroke="#fff" /></template>
          <template v-else-if="b.icon === 'udemy'"><rect width="16" height="16" fill="#fff" /><path d="M3 1.500h10v7H3zM1 9.500h14v3H1z" fill="#111" /><path d="M5 3.500h2v3H5zM8 3.500h2v1.500H8z" fill="#fff" /><circle cx="4" cy="13" r="2" fill="#111" /><circle cx="12" cy="13" r="2" fill="#111" /></template>
          <template v-else><rect x=".5" y=".5" width="15" height="15" fill="#fff" stroke="#222" /><path d="M16 5V16H6z" fill="#fad61d" /><text x="3" y="12" font-size="13" font-weight="900" font-family="Roboto, sans-serif" fill="#111">P</text></template>
        </svg>
        <span class="bmt" :class="{ fade: !b.short }"><span v-fit="b.w">{{ b.text }}</span></span>
      </div>
      <span class="more">»</span>
    </nav>

    <main class="viewport">
      <div class="page">
        <h3><span v-fit="374">Real Time Location</span></h3>
        <section class="map">
          <svg class="canvas" width="1524" height="450" viewBox="3 9 4572 1350">
            <rect x="3" y="9" width="4572" height="1350" fill="#e8e8e8" />
            <g v-for="[name, sheets] in layers" :key="name" :class="name">
              <path v-for="(d, t) in sheets" :key="t" :d="d" :transform="at(t)" />
            </g>
            <g class="hw-case"><path v-for="(h, i) in highways" :key="i" :d="h[1]" :transform="at(h[0])" :class="{ thin: h[2] }" /></g>
            <g class="hw"><path v-for="(h, i) in highways" :key="i" :d="h[1]" :transform="at(h[0])" :class="{ thin: h[2] }" /></g>

            <g v-for="(s, i) in shields" :key="'s' + i" :transform="`translate(${T[s[0]][0] + s[1]} ${T[s[0]][1] + s[2]})`">
              <path d="M-18 -22H18Q23 -22 23 -17V10Q23 14 18 16L0 23L-18 16Q-23 14 -23 10V-17Q-23 -22 -18 -22Z" fill="#fdd835" stroke="#d8a900" stroke-width="3" />
              <text text-anchor="middle" y="10" class="shield">{{ s[3] }}</text>
            </g>
            <g v-for="(s, i) in trains" :key="'t' + i" :transform="`translate(${T[s[0]][0] + s[1]} ${T[s[0]][1] + s[2]})`">
              <rect x="-17" y="-17" width="34" height="34" rx="4" fill="#1ab6ff" stroke="#fff" stroke-width="2" />
              <path d="M-8 -10H8V6H-8Z" fill="#fff" stroke="#fff" stroke-width="3" stroke-linejoin="round" /><path d="M-8 13L-4 7M8 13L4 7" stroke="#fff" stroke-width="3" /><path d="M-7 -7H-1.500V-1H-7ZM1.500 -7H7V-1H1.500ZM-7 2.500h3.500v3H-7zM3.500 2.500H7v3H3.500z" fill="#1ab6ff" />
            </g>
            <g v-for="(p, i) in poi" :key="'p' + i" :transform="`translate(${T[p[0]][0] + p[1]} ${T[p[0]][1] + p[2]})`">
              <path :class="p[3]" d="M0 38Q-3 28 -12 19A23 23 0 1 1 12 19Q3 28 0 38Z" />
              <circle v-if="p[4] === 'dot'" r="10" fill="#fff" />
              <path v-else-if="p[4] === 'h'" d="M-6 -10V8M6 -10V8M-6 -1H6" stroke="#fff" stroke-width="4" />
              <path v-else-if="p[4] === 'tree'" d="M0 -15L10 3H3V11H-3V3H-10Z" fill="#fff" />
              <path v-else-if="p[4] === 'film'" d="M-11 -11H-7V-8H-4V-11H4V-8H7V-11H11V9H7V6H4V9H-4V6H-7V9H-11Z" fill="#fff" />
              <path v-else-if="p[4] === 'civic'" d="M-14 -6L0 -14L14 -6V-3H-14ZM-11 -1h5V7h-5ZM-2 -1h5V7h-5ZM6 -1h5V7h-5ZM-14 8H14V12H-14Z" fill="#fff" />
              <path v-else-if="p[4] === 'church'" d="M-13 9V0L-9 -4L-5 0V9ZM-3 9V-10L0 -14L3 -10V9ZM5 9V-2L9 -6L13 -2V9Z" fill="#fff" />
              <path v-else d="M-12 -7Q-3 -12 -4 -4Q2 0 -3 6Q-10 11 -14 3M-4 -3Q2 -6 7 -4Q13 -1 9 5Q4 8 1 1M1 -11Q6 -6 11 -11M6 -14v1" fill="none" stroke="#fff" stroke-width="3.500" />
            </g>

            <text v-for="(l, i) in labels" :key="i" :class="['lb', l[4]]" :transform="place(l)" :textLength="l[5]" lengthAdjust="spacingAndGlyphs">{{ l[3] }}</text>

            <g class="route">
              <path d="M2180 285Q2140 288 2130 310V455L2145 480 2172 505V530L2188 540 2178 592 2206 600 2198 622 2186 625 2184 690V702" />
              <path d="M2206 735V816H2380Q2390 830 2390 890 2394 960 2408 1005L2420 1040" />
              <path d="M2420 1020L2410 1075H2430L2445 1065 2455 1073" />
            </g>
            <path class="route-dark" d="M2200 816H2265M2208 745V816M2176 702H2208" />

            <path d="M2450 988m-36 0a36 36 0 1 1 72 0Z" fill="#ea4335" />
            <g v-for="m in [['C', 2180, 200], ['B', 2238, 726]]" :key="m[0]" :transform="`translate(${m[1]} ${m[2]})`">
              <path d="M0 84Q-2 52 -22 31A37.500 37.500 0 1 1 22 31Q2 52 0 84Z" fill="#ea4335" stroke="#d23a2e" stroke-width="2" />
              <text class="mk" text-anchor="middle" y="15">{{ m[0] }}</text>
            </g>
            <g transform="translate(2450 1009)">
              <path d="M-36 -36H36Q38 -36 38 -34V34Q38 37 35 37H15L0 58L-15 37H-35Q-38 37 -38 34V-34Q-38 -36 -36 -36Z" fill="#744424" stroke="#fff" stroke-width="3" />
              <path d="M-7 -19H33V14H-7Z" fill="#fff" /><path d="M-10 -8V14H-29V3L-22 -8Z" fill="#fff" /><path d="M-24 2L-20 -4H-14V2Z" fill="#744424" />
              <path d="M-29 15H33" stroke="#fff" stroke-width="3" />
              <circle cx="-17" cy="19" r="6.500" fill="#fff" stroke="#744424" stroke-width="3" /><circle cx="17" cy="19" r="6.500" fill="#fff" stroke="#744424" stroke-width="3" />
            </g>
            <text class="logo" x="23" y="1335" textLength="186" lengthAdjust="spacingAndGlyphs"><tspan fill="#4285f4">G</tspan><tspan fill="#ea4335">o</tspan><tspan fill="#fbbc05">o</tspan><tspan fill="#4285f4">g</tspan><tspan fill="#34a853">l</tspan><tspan fill="#ea4335">e</tspan></text>
          </svg>
          <div class="types"><b>Map</b><span>Satellite</span></div>
          <div class="full"><svg width="16" height="16" viewBox="0 0 16 16"><path d="M1.200 5V1.200H5M11 1.200h3.800V5M14.800 11v3.800H11M5 14.800H1.200V11" fill="none" stroke="#666" stroke-width="2.400" /></svg></div>
          <div class="side">
            <div class="peg"><svg width="14" height="21" viewBox="0 0 14 21"><circle cx="7" cy="4" r="3.600" fill="#fbb827" stroke="#dc8b13" stroke-width=".6" /><path d="M3 7.500h8l2 7-2 .8-.7-1.800L10 20H4l-.3-6.500L3 15.300 1 14.500z" fill="#f9ac1b" /><path d="M3.500 7.500h7L7 10zM6.700 14h.6v6h-.6z" fill="#d07f10" /></svg></div>
            <div class="zoom">
              <svg width="20" height="27" viewBox="4 0 20 27"><path d="M9 13.500h11M14.500 8v11" stroke="#666" stroke-width="3" /></svg>
              <svg class="minus" width="20" height="27" viewBox="4 0 20 27"><path d="M9 13.500h11" stroke="#666" stroke-width="3" /></svg>
            </div>
          </div>
          <div class="attr"><span v-fit="108">Map data ©2018 Google</span><span v-fit="59">Terms of Use</span><span v-fit="83">Report a map error</span></div>
          <div class="tip"><span v-fit="115">Current Location</span></div>
        </section>
        <div class="btns">
          <button class="btn hot"><span v-fit="237">REAL TIME LOCATION TRACKING</span></button>
          <button class="btn"><span v-fit="82">DRAW MAP</span></button>
        </div>
      </div>
      <div class="sb"><i class="up"></i><div class="thumb"></div><i class="down"></i></div>
    </main>

    <footer class="dock">
      <svg class="dockbg" width="1920" height="64" viewBox="0 0 1920 64">
        <rect width="1920" height="64" fill="#04070a" />
        <path d="M0 0H60L20 64H0ZM70 0H150V64H90L110 30ZM246 0H370L300 45 246 64Z" fill="#121c24" />
        <path d="M400 64L520 0H600V20L480 64Z" fill="#111a21" />
        <path d="M650 64L700 0H780L830 40 900 64Z" fill="#0b1218" />
        <path d="M900 0H1130L1180 30 1060 22 960 30ZM1240 64L1300 20 1420 8 1520 0H1680L1560 28 1400 50ZM1640 64L1760 34 1920 18V40L1800 64Z" fill="#0a1116" />
        <path d="M0 0H1920V1.500H0Z" fill="#39434a" />
      </svg>
      <div v-for="d in dock" :key="d" class="app">
        <svg width="48" height="48" viewBox="0 0 48 48">
          <template v-if="d === 'ubuntu'">
            <circle cx="24" cy="24" r="19" fill="#45484a" /><path d="M6 14Q14 0 34 3 20 4 12 20L7 44Q3 26 6 14ZM40 34Q32 48 18 46 32 44 38 28L43 10Q46 24 40 34Z" fill="#777b7d" /><circle cx="24" cy="24" r="14.500" fill="#fff" /><circle cx="24" cy="24" r="7.500" fill="none" stroke="#111" stroke-width="3" stroke-dasharray="13.700 2" /><circle cx="14.500" cy="24" r="2.600" fill="#111" /><circle cx="28.800" cy="15.800" r="2.600" fill="#111" /><circle cx="28.800" cy="32.200" r="2.600" fill="#111" />
          </template>
          <template v-else-if="d === 'files'"><path d="M6 8q0-2 2-2h12l3 4h17q2 0 2 2v10H6z" fill="#546e7a" /><path d="M4 15q0-1.500 1.500-1.500h37q1.500 0 1.500 1.500v27q0 2-2 2H6q-2 0-2-2z" fill="#cfd8dc" /><rect x="18" y="19.500" width="12" height="2.500" fill="#fff" /></template>
          <template v-else-if="d === 'writer' || d === 'calc' || d === 'impress'">
            <rect x="6" y="4" width="36" height="40" rx="1.500" :fill="d === 'writer' ? '#3f51b5' : d === 'calc' ? '#4caf50' : '#ff5722'" /><path d="M9 7H27L39 19V41H9Z" fill="#f5f5f5" /><path d="M33 7H39V17Z" fill="#fff" />
            <path v-if="d === 'writer'" d="M14 23h20M14 27h20M14 31h20M14 35.500h13" stroke="#ccc" stroke-width="2" />
            <path v-else-if="d === 'calc'" d="M14.500 22.500h19v13h-19zM14.500 27h19M14.500 31h19M21 22.500v13M27.500 22.500v13" fill="none" stroke="#ccc" stroke-width="2" />
            <template v-else><path d="M18 22v5.500h5.500A5.500 5.500 0 1 1 18 22z" fill="#ccc" /><path d="M26 23h8M26 27.500h8M14 34h16" stroke="#ccc" stroke-width="2" /></template>
          </template>
          <template v-else-if="d === 'plank'"><rect x="4" y="6" width="40" height="36" rx="1.500" fill="#03a9f4" /><path d="M4 10V7.500Q4 6 5.500 6h37Q44 6 44 7.500V10z" fill="#424242" /><path d="M28 22h8l4 5v11H28z" fill="#f5f5f5" /></template>
          <template v-else-if="d === 'settings'"><path d="M20 4h8l1 6 4 2 6-3 4 8-5 4v6l5 4-4 8-6-3-4 2-1 6h-8l-1-6-4-2-6 3-4-8 5-4v-6l-5-4 4-8 6 3 4-2z" fill="#607d8b" /><circle cx="24" cy="24" r="8" fill="#fff" /></template>
          <template v-else-if="d === 'chrome'"><circle cx="24" cy="24" r="20" fill="#db4437" /><path d="M24 24L6.700 14A20 20 0 0 0 20 43.600L28 30Z" fill="#0f9d58" /><path d="M24 15H42A20 20 0 0 1 22 44L32 27Z" fill="#ffcd40" /><circle cx="24" cy="24" r="9.500" fill="#f1f1f1" /><circle cx="24" cy="24" r="7.600" fill="#4285f4" /></template>
          <template v-else-if="d === 'vlc'"><path d="M10 28h28l6 14q.5 2-1.500 2h-37Q3.500 44 4 42z" fill="#ff8f00" /><path d="M20 5q4-2 8 0l8 30q-12 8-24 0z" fill="#f5f5f5" /><path d="M20.300 4q3.700-1.500 7.400 0l2 8q-5.700 2-11.400 0zM16.500 20q7.500 3 15 0l2.200 8.500q-9.700 4-19.400 0z" fill="#ff8f00" /></template>
          <template v-else-if="d === 'steam'"><circle cx="24" cy="24" r="20" fill="#1a237e" /><circle cx="31" cy="19" r="6" fill="none" stroke="#eceff1" stroke-width="3.500" /><path d="M5 25l13 6 8-8 5 4-8 6q-2 6-7 5-4-1-4-5L5 30z" fill="#eceff1" /></template>
          <template v-else-if="d === 'sublime'"><rect x="4" y="4" width="40" height="40" rx="2" fill="#c8c8c8" /><rect x="8" y="7.500" width="32" height="33" rx="2" fill="#4a4a4a" /><path d="M29.500 16q-5.500-3-9.500-.5t0 6.500l8 3.500q3.500 3 0 6t-9.500 0" fill="none" stroke="#ff9e22" stroke-width="3.600" /></template>
          <template v-else-if="d === 'code'"><path d="M36 2l10 5v34l-10 5L2 14.500 6 11l30 22z" fill="#1e88e5" /><path d="M36 2l10 5L6 37l-4-3V15l4-3 12 10z" fill="#2196f3" /><path d="M36 14v20L24 24z" fill="#05090d" /><path d="M6 19v11l6-5.500z" fill="#05090d" /></template>
          <template v-else><rect x="4" y="6" width="40" height="36" rx="2" fill="#455a64" /><text x="8" y="17.500" font-size="11" font-weight="700" font-family="'Liberation Mono', monospace" fill="#fff">$_</text></template>
        </svg>
        <i v-if="running.includes(d)" class="run"></i>
        <template v-if="d === 'chrome'"><i class="act"></i><i class="tri"></i></template>
      </div>
      <svg class="trash" width="40" height="42" viewBox="0 0 40 42"><path d="M5 7H35L33 40q0 2-2 2H9q-2 0-2-2z" fill="#546e7a" /><path d="M3 3.500h34v5H3zM14 1h12v3H14z" fill="#607d8b" /><path d="M12 12v26M17.500 12v26M23 12v26M28.500 12v26" stroke="#37505c" stroke-width="2" /></svg>
    </footer>
  </div>
</template>

<style>
html, body { margin: 0; overflow: hidden; }
</style>

<style scoped>
.desktop { width: 1920px; height: 1080px; display: flex; flex-direction: column; font-family: "Noto Sans", "Open Sans", sans-serif; background: #e3f2fd; overflow: hidden; }
.desktop span { white-space: nowrap; }
.panel { height: 24px; background: #2b373d; color: #dfe3e4; display: flex; align-items: center; justify-content: space-between; font-size: 14.500px; }
.panel-title { padding: 0 0 2px 6px; font-weight: 700; line-height: 22px; }
.tray { display: flex; align-items: center; padding-right: 10px; line-height: 22px; }
.tray .pct, .tray .clock { padding-bottom: 2px; }
.lang { width: 16px; height: 16px; margin-left: 15px; background: #dfe3e4; color: #2b373d; border-radius: 2px; font-size: 11px; line-height: 16px; text-align: center; }
.bt { margin-left: 19px; }
.bat { margin-left: 18px; }
.pct { width: 39px; margin-left: 7px; }
.vol { margin-left: 14px; }
.clock { width: 61px; margin: 0 14px 0 13px; }

.tabstrip { height: 29px; background: #ccc; box-shadow: inset 0 -1px #8f8f8f; display: flex; align-items: center; color: #222; position: relative; }
.tabshape { position: absolute; left: 0; top: 0; }
.fav { position: relative; margin-left: 25px; width: 19px; font-family: "DejaVu Sans", sans-serif; font-size: 14px; }
.tabtitle { position: relative; width: 133px; overflow: hidden; font-size: 14px; line-height: 26px; -webkit-mask-image: linear-gradient(90deg, #000 76%, transparent 99%); mask-image: linear-gradient(90deg, #000 76%, transparent 99%); }
.tabx { position: relative; margin-left: 8px; }
.user { margin-left: auto; margin-right: 5px; margin-top: -7px; width: 52px; height: 16px; border: 1px solid #a3a3a3; border-radius: 2px; font-size: 12px; line-height: 16px; text-align: center; color: #f4f4f4; -webkit-text-stroke: 2px #555; paint-order: stroke fill; }

.toolbar { height: 33px; background: #f2f2f2; display: flex; align-items: center; padding-top: 3px; box-sizing: border-box; }
.omni { width: 1745px; height: 26px; margin-left: 10px; border: 1px solid #a9a9a9; border-radius: 3px; background: #fff; display: flex; align-items: center; padding: 0 6px 0 7px; }
.url { margin-left: 6px; font-size: 14px; line-height: 24px; color: #808080; }
.url b { font-weight: 400; color: #111; }
.loc { margin-left: auto; margin-right: 10px; }
.ub { margin-left: 11px; }
.dots { margin-left: 23px; }

.bookmarks { height: 28px; background: #f2f2f2; border-bottom: 1px solid #b6b6b6; display: flex; align-items: center; padding: 0 23px 1px 9px; box-sizing: border-box; color: #111; font-size: 14px; }
.bm { display: flex; align-items: center; width: 150px; flex: none; }
.bm svg { flex: none; }
.bm.apps { width: 72px; }
.bm.short { width: 88px; }
.bmt { margin-left: 8px; width: 114px; flex: none; overflow: hidden; line-height: 22px; padding-bottom: 1px; }
.apps .bmt { margin-left: 9px; width: 40px; }
.short .bmt { width: 58px; }
.fade { -webkit-mask-image: linear-gradient(90deg, #000 70%, transparent 100%); mask-image: linear-gradient(90deg, #000 70%, transparent 100%); }
.more { margin-left: auto; font-size: 16px; line-height: 20px; padding-bottom: 3px; }

.viewport { height: 902px; display: flex; background: #e3f2fd; }
.page { width: 1905px; display: flex; flex-direction: column; align-items: center; font-family: Roboto, sans-serif; }
h3 { margin: 22px 0 0; height: 48px; line-height: 48px; font-size: 43.800px; font-weight: 400; color: rgba(0, 0, 0, .87); }
.map { position: relative; width: 1524px; height: 450px; margin-top: 39px; }
.canvas { display: block; overflow: hidden; }

.warm path { fill: #ecebe8; }
.light path { fill: #eaf4e9; }
.park path { fill: #c3ecb2; }
.cream path { fill: #fdf1dc; }
.water path { fill: #aadaff; }
.river path { fill: none; stroke: #aadaff; stroke-width: 4; }
.rail path { fill: none; stroke: #cfd1d2; stroke-width: 3; }
.minor path { fill: none; stroke: #f9f9f9; stroke-width: 3.500; }
.road path { fill: none; stroke: #fff; stroke-width: 7.500; stroke-linejoin: round; stroke-linecap: round; }
.hw-case path { fill: none; stroke: #f3d276; stroke-width: 17; stroke-linejoin: round; }
.hw path { fill: none; stroke: #ffe99b; stroke-width: 12; stroke-linejoin: round; }
.hw-case .thin { stroke-width: 12; }
.hw .thin { stroke-width: 8; }
.slate { fill: #7b9eb0; }
.rose { fill: #f88181; }
.teal { fill: #12b5cb; }
.green { fill: #4db546; }
.route path { fill: none; stroke: #0a84ff; stroke-opacity: .58; stroke-width: 18; stroke-linejoin: round; stroke-linecap: butt; }
.route-dark { fill: none; stroke: #0a84ff; stroke-opacity: .7; stroke-width: 18; }

.lb { font-family: Roboto, "Noto Sans Kannada", "Noto Sans", sans-serif; font-size: 39px; paint-order: stroke; stroke: #fff; stroke-opacity: .85; stroke-width: 6px; stroke-linejoin: round; }
.poi, .kn { fill: #587688; }
.thea, .knc { fill: #0f7f8b; }
.parkl, .kng { fill: #1f8735; }
.hosp, .knr { fill: #b84e59; }
.town, .knt { fill: #414b57; }
.town { font-size: 37px; }
.hood, .hoods, .knh, .knhb { fill: #66758a; font-weight: 700; }
.hood { font-size: 47px; letter-spacing: 3px; }
.hoods { font-size: 35px; letter-spacing: 2px; }
.kn, .knc, .kng, .knr { font-size: 34px; }
.knt { font-size: 36px; }
.knh { font-size: 33px; }
.knhb { font-size: 40px; }
.way { font-size: 26px; fill: #54626d; }
.exp { font-size: 29px; fill: #8a5a1e; font-weight: 500; }
.shield { font-family: Roboto, sans-serif; font-weight: 700; font-size: 27px; fill: #4a3f14; }
.mk { font-family: Roboto, sans-serif; font-size: 42px; fill: #fff; }
.logo { font-family: "Liberation Sans", Inter, sans-serif; font-size: 60px; font-weight: 400; stroke: #fff; stroke-width: 3px; paint-order: stroke; }

.types { position: absolute; left: 10px; top: 10px; display: flex; height: 29px; background: #fff; border-radius: 2px; box-shadow: 0 1px 4px rgba(0, 0, 0, .3); font-size: 11px; line-height: 29px; color: #565656; }
.types b { width: 37px; padding-left: 1px; text-align: center; color: #000; border-right: 1px solid #e4e4e4; box-sizing: border-box; font-weight: 500; -webkit-text-stroke: .2px #000; }
.types span { width: 56px; padding-left: 1px; box-sizing: border-box; text-align: center; }
.full { position: absolute; left: 1485px; top: 10px; width: 25px; height: 25px; background: #fff; display: flex; align-items: center; justify-content: center; }
.side { position: absolute; left: 1486px; top: 333px; width: 28px; display: flex; flex-direction: column; gap: 10px; }
.peg, .zoom { background: #fff; border-radius: 2px; box-shadow: 0 1px 4px rgba(0, 0, 0, .3); height: 28px; display: flex; align-items: center; justify-content: center; }
.zoom { height: 55px; flex-direction: column; }
.zoom svg { display: block; }
.minus { border-top: 1px solid #e6e6e6; }
.attr { position: absolute; right: 0; bottom: 0; height: 14px; padding: 0 7px 0 5px; background: rgba(245, 245, 245, .7); display: flex; gap: 12px; font-size: 10px; line-height: 14px; color: #444; }
.tip { position: absolute; left: 833px; top: 356px; width: 132px; height: 26px; box-sizing: border-box; background: #000; color: #d6d6d6; box-shadow: 2px 3px 5px rgba(0, 0, 0, .5); font-family: "Noto Sans", sans-serif; font-size: 14px; line-height: 25px; padding-left: 9px; }

.btns { margin-top: 66px; display: flex; flex-direction: column; align-items: center; gap: 22px; }
.btn { height: 36px; padding: 0; width: 141px; border: 0; border-radius: 2px; background: #26a69a; color: #fff; font: 400 15px/36px Roboto, sans-serif; box-shadow: 0 2px 2px rgba(0, 0, 0, .14), 0 1px 5px rgba(0, 0, 0, .12), 0 3px 1px -2px rgba(0, 0, 0, .2); }
.hot { width: 297px; margin-right: 4px; background: #2bb7a9; }

.sb { width: 15px; background: #f1f1f1; display: flex; flex-direction: column; align-items: center; }
.up { border: 4.500px solid transparent; border-top: 0; border-bottom: 5px solid #a3a3a3; margin: 5px 0 5px; }
.thumb { width: 13px; height: 853px; background: #c1c1c1; }
.down { border: 4.500px solid transparent; border-bottom: 0; border-top: 5px solid #505050; margin-top: 24px; }

.dock { position: relative; height: 64px; display: flex; padding-left: 2px; overflow: hidden; background: #05090d; }
.dockbg { position: absolute; left: 0; top: 0; }
.app { position: relative; width: 59px; height: 64px; display: flex; align-items: center; justify-content: center; }
.run { position: absolute; left: 24.500px; bottom: 0; border: 5px solid transparent; border-top: 0; border-bottom: 5px solid #ddd; }
.act { position: absolute; left: 24px; bottom: 0; width: 3px; height: 5px; background: #ddd; box-shadow: 4px 0 #ddd, 8px 0 #ddd; }
.tri { position: absolute; left: 26px; top: 0; border: 4px solid transparent; border-bottom: 0; border-top: 5px solid #999; }
.trash { position: relative; margin: 11px 12px 0 auto; }
</style>
